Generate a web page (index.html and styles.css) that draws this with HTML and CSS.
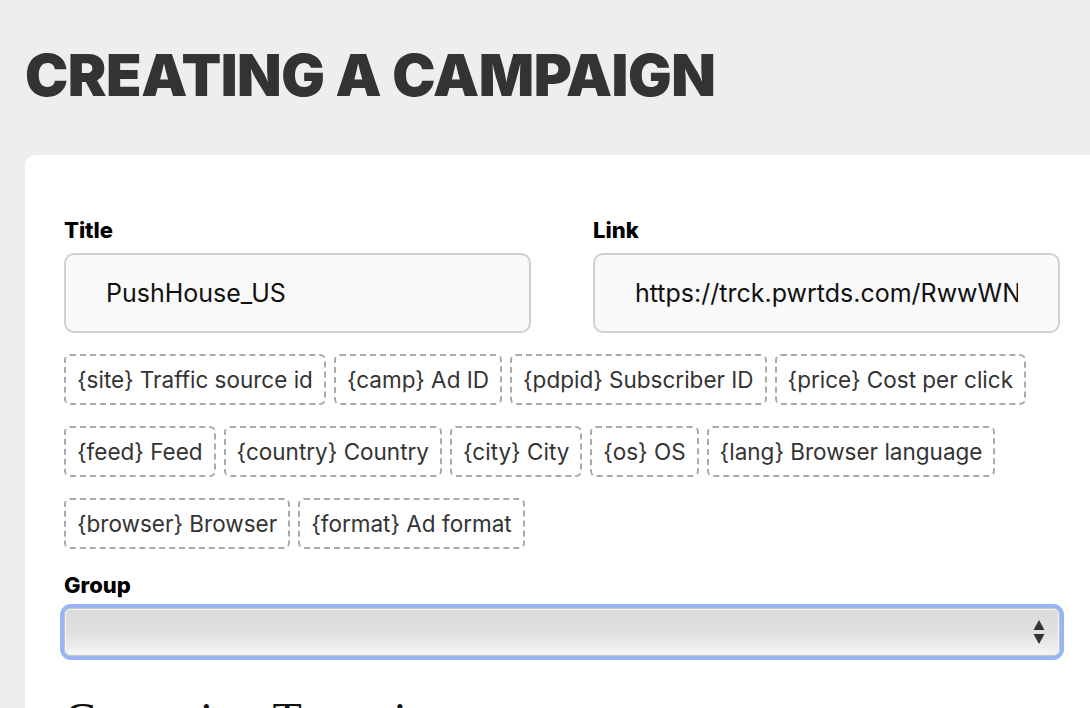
FILE: index.html
```html
<!DOCTYPE html>
<html>
<head>
	<title>Creating a campaign</title>
	<meta charset="utf-8">
	<link rel="stylesheet" href="styles.css">
</head>
<body>
	<h1 class="page-title">CREATING A CAMPAIGN</h1>
	<div class="card">
		<div class="row">
			<div class="field">
				<label class="label">Title</label>
				<div class="input"><div class="value">PushHouse_US</div></div>
			</div>
			<div class="field">
				<label class="label">Link</label>
				<div class="input"><div class="value">https://trck.pwrtds.com/RwwWNb7x</div></div>
			</div>
		</div>
		<div class="tags">
			<span class="tag">{site} Traffic source id</span>
			<span class="tag">{camp} Ad ID</span>
			<span class="tag">{pdpid} Subscriber ID</span>
			<span class="tag">{price} Cost per click</span>
			<span class="tag">{feed} Feed</span>
			<span class="tag">{country} Country</span>
			<span class="tag">{city} City</span>
			<span class="tag">{os} OS</span>
			<span class="tag">{lang} Browser language</span>
			<span class="tag">{browser} Browser</span>
			<span class="tag">{format} Ad format</span>
		</div>
		<label class="label">Group</label>
		<div class="select">
			<svg class="arrows" width="12" height="26" viewBox="0 0 12 26">
				<path d="M6 1 L11.5 11 L0.5 11 Z" fill="#333"/>
				<path d="M0.5 15 L11.5 15 L6 25 Z" fill="#333"/>
			</svg>
		</div>
		<h2 class="section-title">Campaign Targeting</h2>
	</div>
</body>
</html>
```

FILE: styles.css
```css
html, body{
	overflow: hidden;
}
body{
	margin: 0;
	background: #eeeeee;
	font-family: Inter, "Liberation Sans", sans-serif;
	color: #111;
}
.page-title{
	margin: 0;
	padding: 40px 0 0 25px;
	height: 155px;
	box-sizing: border-box;
	font-size: 58px;
	line-height: 70px;
	font-weight: 900;
	color: #333;
	letter-spacing: -0.5px;
}
.card{
	margin-left: 25px;
	width: 1074px;
	box-sizing: border-box;
	padding: 60px 39px 40px 39px;
	background: #fff;
	border-radius: 10px 0 0 0;
}
.row{
	display: grid;
	grid-template-columns: minmax(0, 1fr) minmax(0, 1fr);
	column-gap: 62px;
}
.label{
	display: block;
	font-size: 22px;
	font-weight: 800;
	line-height: 30px;
	color: #000;
	margin-bottom: 8px;
}
.input{
	height: 80px;
	box-sizing: border-box;
	border: 2px solid #d0d0d0;
	border-radius: 10px;
	background: #f9f9f9;
	padding: 0 40px;
}
.value{
	font-size: 25px;
	line-height: 76px;
	color: #111;
	white-space: nowrap;
	overflow: hidden;
}
.tags{
	display: flex;
	flex-wrap: wrap;
	gap: 21px 8px;
	margin-top: 21px;
	margin-bottom: 21px;
}
.tag{
	height: 51px;
	box-sizing: border-box;
	border: 2px dashed #aaaaaa;
	border-radius: 6px;
	padding: 0 11px;
	font-size: 22.5px;
	line-height: 47px;
	color: #333;
	white-space: nowrap;
}
.select{
	position: relative;
	height: 48px;
	margin-top: 6px;
	box-sizing: border-box;
	border: 1px solid #c4c4c4;
	border-radius: 7px;
	background: linear-gradient(#dadada, #e1e1e1 50%, #eeeeee 85%, #f6f6f6);
	box-shadow: 0 0 0 4px #98b4f2, inset 0 0 0 1px #f4f4f4;
}
.arrows{
	position: absolute;
	right: 14px;
	top: 10px;
}
.section-title{
	margin: 36px 0 0 0;
	font-family: "Liberation Serif", serif;
	font-size: 48px;
	font-weight: normal;
}
```
